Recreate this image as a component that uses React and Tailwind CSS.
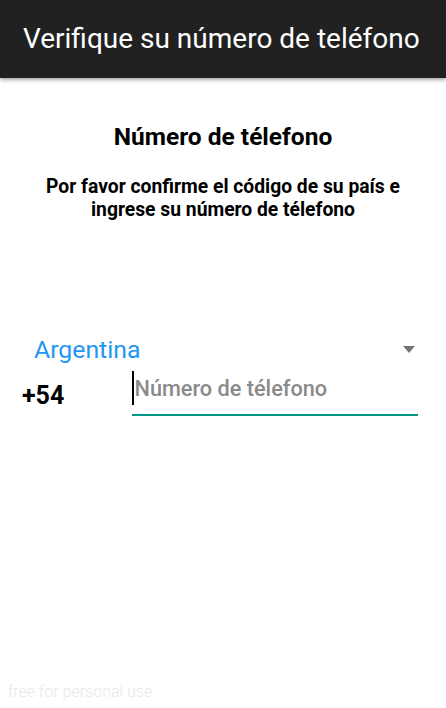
export default function App() {
  return (
    <div className="w-[446px] h-[708px] bg-white relative overflow-hidden" style={{ fontFamily: "Roboto, 'Noto Sans', sans-serif" }}>
      <div className="h-[78px] bg-[#212121] flex items-center pl-[23px] shadow-[0_2px_4px_rgba(0,0,0,0.35)] relative z-10">
        <span className="text-white text-[28px] leading-none">Verifique su número de teléfono</span>
      </div>
      <div className="flex flex-col items-center">
        <div className="mt-[45px] text-[24.5px] font-bold text-black leading-[28px]">Número de télefono</div>
        <div className="mt-[24px] text-[19.3px] font-bold text-black text-center leading-[23px]">
          Por favor confirme el código de su país e<br />ingrese su número de télefono
        </div>
      </div>
      <div className="mt-[114px] pl-[34px] pr-[31px] flex items-center justify-between">
        <span className="text-[#2196F3] text-[24.8px] leading-[30px]">Argentina</span>
        <svg width="12" height="7" viewBox="0 0 12 7" className="-mt-[2px]"><path d="M0 0 L12 0 L6 7 Z" fill="#757575" /></svg>
      </div>
      <div className="flex items-start mt-[6px]">
        <div className="w-[132px] pl-[22px] pt-[10px] text-[25px] font-bold text-black leading-[30px]">+54</div>
        <div className="w-[286px] relative">
          <div className="h-[34px] flex items-center">
            <div className="w-[1.5px] h-[34px] bg-black" />
            <span className="text-[21.7px] font-medium text-[#8a8a8a] leading-[28px] ml-[1px] mt-[2px]">Número de télefono</span>
          </div>
          <div className="h-[2px] bg-[#009688] mt-[9px]" />
        </div>
      </div>
      <div className="absolute left-[8px] bottom-[4px] text-[16px] font-light text-[#e8e8e8]">free for personal use</div>
    </div>
  );
}
